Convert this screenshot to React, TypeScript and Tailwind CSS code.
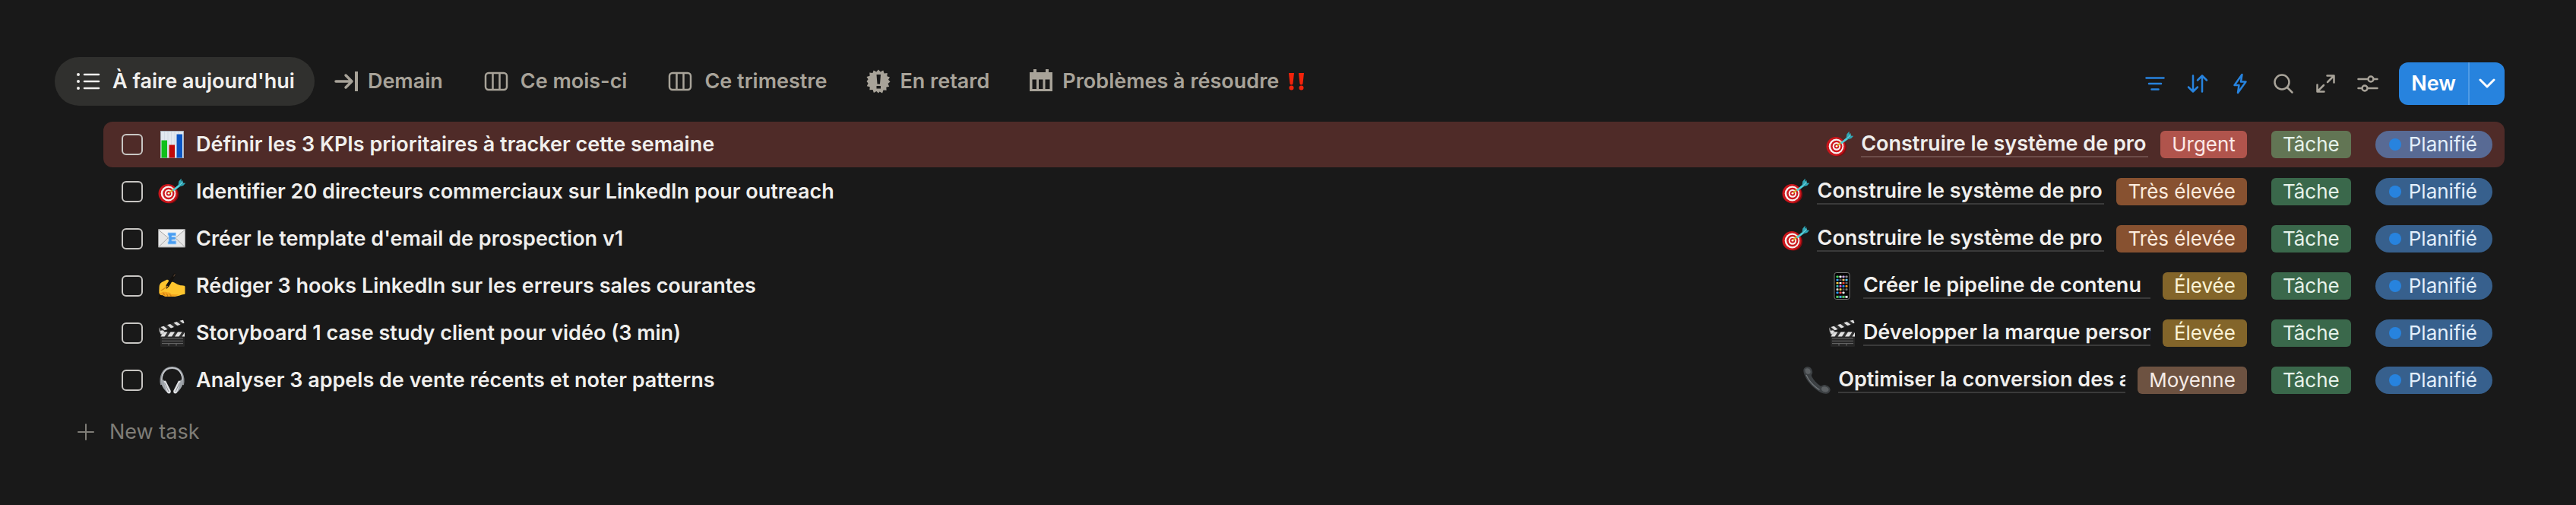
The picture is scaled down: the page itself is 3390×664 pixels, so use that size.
import { useState } from "react";
import type { ReactNode } from "react";
import clsx from "clsx";

type Priority = "Urgent" | "Très élevée" | "Élevée" | "Moyenne";

type Task = {
  id: string;
  title: string;
  icon: ReactNode;
  project: string;
  projectIcon: ReactNode;
  priority: Priority;
  overdue?: boolean;
};

/* ---------- Emojis ---------- */

const ChartEmoji = () => (
  <svg viewBox="0 0 36 36" className="size-9 shrink-0" aria-hidden="true">
    <rect x="3" y="0" width="31" height="36" fill="#a9b1bb" />
    <rect x="4" y="1" width="29" height="34" fill="#e1e8f0" />
    <path d="M8.500 1v34M13 1v34M17.500 1v34M22 1v34M26.500 1v34" stroke="#d2dbe6" strokeWidth="1" />
    <rect x="4.500" y="12.500" width="7.500" height="23" fill="#0fc01b" />
    <rect x="14.500" y="18.500" width="7.500" height="17" fill="#c00a0a" />
    <rect x="24.500" y="4.500" width="7.500" height="31" fill="#0a55c4" />
  </svg>
);

const TargetEmoji = () => (
  <svg viewBox="0 0 36 36" className="size-9 shrink-0" aria-hidden="true">
    <ellipse cx="15" cy="21.500" rx="12" ry="12" fill="#7d0b0f" />
    <ellipse cx="13" cy="20.500" rx="12.500" ry="12.500" fill="#c9151b" />
    <ellipse cx="13.500" cy="20.500" rx="9.800" ry="10" fill="#f7efee" />
    <ellipse cx="13.800" cy="20.500" rx="7.600" ry="7.800" fill="#cd181e" />
    <ellipse cx="13.900" cy="20.400" rx="5.200" ry="5.400" fill="#f7efee" />
    <ellipse cx="14" cy="20.300" rx="3.200" ry="3.300" fill="#cd181e" />
    <circle cx="14" cy="20.200" r="1.400" fill="#fff" />
    <path d="M14.500 20l6-5.500" stroke="#d8a92b" strokeWidth="2" />
    <path d="M19 15.500l8.500-7 1.800 2.200-8.800 6.800z" fill="#4fd0dc" />
    <path d="M26.500 9.500l.8-5 3.200-3.700.4 3.800 1.800-1.600-.2 3.500 3.700.3-3 3.200-5.200 1.500z" fill="#2fa5b4" />
    <path d="M27.500 10l5-4.500" stroke="#8be6ee" strokeWidth="1" />
  </svg>
);

const MailEmoji = () => (
  <svg viewBox="0 0 36 36" className="size-9 shrink-0" aria-hidden="true">
    <rect x="0" y="5" width="36" height="24.500" rx="1" fill="#9b9b9b" />
    <rect x="1" y="6" width="34" height="22.500" fill="#e6e6e6" />
    <path d="M1 28.500l12.500-12M35 28.500l-12.500-12" stroke="#a8a8a8" strokeWidth="1" />
    <path d="M1 6.500l15 12.500q2 1.500 4 0l15-12.500" fill="#f3f3f3" stroke="#a8a8a8" strokeWidth="1" />
    <path d="M13 10h10.500v4h-5.500v1.500h5v3.500h-5v1.800h5.800v4.200h-10.800v-3.500h1v-8h-1z" fill="#4a9df0" stroke="#a7d0f7" strokeWidth=".8" />
  </svg>
);

const WritingEmoji = () => (
  <svg viewBox="0 0 36 36" className="size-9 shrink-0" aria-hidden="true">
    <path d="M0 36l1.500-5.500L5 28l1 3-3.500 4z" fill="#15120f" />
    <path
      d="M1.500 20c0-3 1-5.500 3.500-7l6-3c2-1 3.500.5 3 2.500l5.500.3c3.500 1.200 5.500 3.200 8.500 4 2.500.7 4.500.6 6.500 1 .7.200 1 .8 1 1.600v8.300c0 .8-.5 1.300-1.300 1.400-4 .4-7.200 2.400-12.200 2.900H12c-2.500.3-3.500-.5-5-1.500-2.500-.3-5-.8-5.500-3.500-.3-2.200 0-4.700 0-7z"
      fill="#fec52e"
    />
    <path
      d="M1.500 26c1.500 1.500 3.500 1 5-.5 2 .5 4.500 0 6 1 2 0 4 .6 5 2.500 4-.2 7 .5 10 .2-2 1-4.500 2.300-7.200 2.800H12c-2.500.3-3.500-.5-5-1.500-2.500-.3-5.200-1-5.500-4.500z"
      fill="#f3a41d"
    />
    <path d="M8 30c.2-1.500-.3-2.300-1.500-3M12.500 31.500c.2-1.500-.3-2.500-1.500-3M17 31.500c0-1-.5-1.800-1.500-2.300" stroke="#b4690f" strokeWidth=".9" fill="none" />
    <path d="M10.500 17L20.500 2c1-1.500 4-.5 3 1.500L14.500 18.500 11 22z" fill="#15120f" />
    <path d="M20.500 5.500l2-3" stroke="#5a4636" strokeWidth="1.200" />
    <path d="M4 24c3-1 5.500-4 8.500-5.500" stroke="#d98d17" strokeWidth="1.200" fill="none" strokeLinecap="round" />
  </svg>
);

const ClapperEmoji = () => (
  <svg viewBox="0 0 36 36" className="size-9 shrink-0" aria-hidden="true">
    <path d="M.5 11L33 .3l1.800 4.500L2.500 16.500z" fill="#2c2c2c" />
    <path d="M3.500 10l5 4.300 4-1.400-5-4.200zM12 7.200l5 4.200 4-1.500-5-4zM20.500 4.500l5 3.800 4-1.500-5-3.700zM28.500 1.800l4.500 3.500 1.500-.8-1.500-3.800z" fill="#dedede" />
    <path d="M1 10.500l3.500 6.500H2z" fill="#b9b9b9" />
    <rect x="3" y="16.500" width="32" height="19" rx="1.200" fill="#333" />
    <rect x="3" y="22.500" width="32" height="13" rx="1.200" fill="#262626" />
    <path d="M7 16.500h5.500l-4 6H3.500zM16.500 16.500H22l-4 6h-5.500zM26 16.500h5.500l-4 6H22zM35 17v5.500h-3.500z" fill="#e2e2e2" />
    <path d="M5 25h28M5 28.300h28M5 31.600h28M14 31.600v3M24 31.600v3" stroke="#6b6b6b" strokeWidth="1" />
    <circle cx="5.500" cy="17" r="2.800" fill="#c9c9c9" />
    <circle cx="5" cy="16.500" r="1" fill="#fff" />
  </svg>
);

const HeadphonesEmoji = () => (
  <svg viewBox="0 0 36 36" className="size-9 shrink-0" aria-hidden="true">
    <path d="M4.500 24C2.500 15 5.500 1.500 18.500 1.500S34.500 15 32.500 24" fill="none" stroke="#8b8f94" strokeWidth="3" />
    <path d="M5 21C4 11 8 1.800 18.500 1.800S33 11 32 21" fill="none" stroke="#c9ccd0" strokeWidth="1.500" />
    <path d="M4 18.500l3-1.500 7.500 14.500c.8 2-1.200 3.500-2.800 2.200C8 30.500 4 25.500 4 18.500z" fill="#9ea3a9" />
    <path d="M33 18.500l-3-1.500-7.500 14.500c-.8 2 1.200 3.500 2.800 2.200C29 30.500 33 25.500 33 18.500z" fill="#9ea3a9" />
    <path d="M7.500 19.500c1-1.500 2.500-1.200 3.200.3l5.800 11.500c1 2-.5 4.200-2 4.200s-2.200-.8-2.800-2.200z" fill="#dfe1e4" />
    <path d="M29.500 19.500c-1-1.500-2.500-1.200-3.200.3l-5.800 11.500c-1 2 .5 4.200 2 4.200s2.200-.8 2.800-2.200z" fill="#dfe1e4" />
    <path d="M8.500 21l5.500 12M28.500 21l-5.500 12" stroke="#85898e" strokeWidth="1" />
  </svg>
);

const appColors = [
  ["#4bd964", "#f4f4f4", "#c9a3e8", "#8c8c8c"],
  ["#3ca6f0", "#555", "#e9b96a", "#5ac8fa"],
  ["#f2d04c", "#f4f4f4", "#ef4b3f", "#666"],
  ["#41c7c7", "#d857d4", "#2b8ff2", "#f59a23"],
  ["#ddd", "#f2d04c", "#555", "#777"],
  ["#2f9cf4", "#ef5350", "#eee", "#111"],
];

const SmartphoneEmoji = () => (
  <svg viewBox="0 0 36 36" className="size-9 shrink-0" aria-hidden="true">
    <rect x="8" y=".5" width="20" height="35" rx="2.800" fill="#050505" stroke="#777" strokeWidth="1" />
    {appColors.map((row, y) =>
      row.map((fill, x) => <rect key={`${x}-${y}`} x={10.5 + x * 4} y={4.5 + y * 4.2} width="3" height="2.700" rx=".7" fill={fill} />)
    )}
    <rect x="10" y="30.500" width="16" height="3.500" fill="#333" />
    {["#4bd964", "#3cb9f2", "#4bd964", "#f4f4f4"].map((fill, x) => (
      <rect key={x} x={10.5 + x * 4} y="31" width="3" height="2.700" rx=".7" fill={fill} />
    ))}
  </svg>
);

const PhoneEmoji = () => (
  <svg viewBox="0 0 36 36" className="size-9 shrink-0" aria-hidden="true">
    <path
      d="M1.500 2C4-.3 9-.5 10.800 3c1.500 3 2 5 .7 7-.8 1.200-.8 2 0 3.500 2.500 4.500 6 8.500 10.500 11.500 1.300.8 2.200.7 3.300-.2 2-1.500 4-1 7 .7 4 2.300 4.200 6.500 1.700 8.700-3.500 3-9 1.300-14-2C11.500 26.700 4.500 19 1.300 10 .2 7-.2 3.700 1.500 2z"
      fill="#3d4144"
    />
    <path d="M3 3c2-1.500 5-1 6 1.200 1 2.200 1 4-.3 5-1.700 1-4.700.8-5.500-1.200C2.500 6 2 4 3 3zM25 27c2-1.300 4-1 6.300.3 2.500 1.600 3 4 1.200 5.300-2 1.400-5.500.8-7.500-.8-1.300-1.200-1.400-3.700 0-4.800z" fill="#5c6063" />
    <path d="M4 11c3.500 8 9.500 14.500 17.500 19.500" stroke="#74797c" strokeWidth="1.200" fill="none" />
  </svg>
);

/* ---------- View icons ---------- */

const ListIcon = () => (
  <svg viewBox="0 0 32 32" className="size-8 shrink-0" aria-hidden="true">
    <path d="M11 7h19M11 16h19M11 25h19" stroke="currentColor" strokeWidth="2.500" strokeLinecap="round" />
    <circle cx="3" cy="7" r="2" fill="currentColor" />
    <circle cx="3" cy="16" r="2" fill="currentColor" />
    <circle cx="3" cy="25" r="2" fill="currentColor" />
  </svg>
);

const ArrowToLineIcon = () => (
  <svg viewBox="0 0 32 32" className="size-8 shrink-0" aria-hidden="true">
    <path d="M2 16h21M15 8l8 8-8 8" fill="none" stroke="currentColor" strokeWidth="3.500" strokeLinecap="round" strokeLinejoin="round" />
    <path d="M29 3v26" stroke="currentColor" strokeWidth="4" />
  </svg>
);

const BoardIcon = () => (
  <svg viewBox="0 0 32 32" className="size-8 shrink-0" aria-hidden="true">
    <rect x="2" y="5" width="28" height="22" rx="4" fill="none" stroke="currentColor" strokeWidth="2.500" />
    <path d="M11.500 5v22M20.500 5v22" stroke="currentColor" strokeWidth="2.500" />
  </svg>
);

const BadgeIcon = () => (
  <svg viewBox="0 0 32 32" className="size-8 shrink-0" aria-hidden="true">
    <path
      d="M16 .5l2.700 3 3.600-2 1.300 3.900 4.100-.3-.3 4.100 3.600 1.200-2 3.300 2.500 2.800-3 2.500 1.700 3.700-3.900 1 .3 4.100-4.100-.2-1.400 3.900-3.500-2L16 31.500l-2.600-2.500-3.500 2-1.400-3.900-4.100.2.300-4.100-3.900-1 1.700-3.700-2-2.500 2-2.800-2-3.300 4.100-1.200-.3-4.100 4.100.3L9.700 1.500l3.600 2z"
      fill="currentColor"
    />
    <path d="M13.500 7h5.500l-1 12.500h-3.500zM13.500 22h5.500v3.500h-5.500z" fill="#191919" />
  </svg>
);

const CalendarIcon = () => (
  <svg viewBox="0 0 32 32" className="size-8 shrink-0" aria-hidden="true">
    <path d="M6 0h4v4h12V0h4v4h5v25H1V4h5zM4.500 13.500V26H10V13.500zM13 13.500V26h5.500V13.500zM21.500 13.500V26h6V13.500z" fill="currentColor" fillRule="evenodd" />
  </svg>
);

const DoubleExclamation = () => (
  <svg viewBox="0 0 22 32" className="h-8 w-[22px] shrink-0" aria-hidden="true">
    <path d="M1 5h7L6.500 19q-.2 1.500-2 1.500t-2-1.500zM14 5h7l-1.500 14q-.2 1.500-2 1.500t-2-1.500z" fill="#f3230b" />
    <circle cx="4.500" cy="24.500" r="3" fill="#f3230b" />
    <circle cx="17.500" cy="24.500" r="3" fill="#f3230b" />
  </svg>
);

/* ---------- Toolbar icons ---------- */

const toolbar = [
  {
    label: "Filtrer",
    active: true,
    icon: <path d="M3.500 8.500h23M7 16h16M10.500 23.500h9" />,
  },
  {
    label: "Trier",
    active: true,
    icon: <path d="M9 5.500v21M3 20.500l6 6 6-6M21 26.500v-21M15 11.500l6-6 6 6" />,
  },
  {
    label: "Automatisations",
    active: true,
    icon: <path d="M17.500 4L7.500 18h6l-1.500 10 10.500-14.500h-6.500z" />,
  },
  {
    label: "Rechercher",
    active: false,
    icon: <path d="M23.500 14a9.500 9.500 0 1 1-19 0 9.500 9.500 0 0 1 19 0zM21 21l6.500 6.500" />,
  },
  {
    label: "Agrandir",
    active: false,
    icon: <path d="M17.500 5.500h9v9M26 6l-8 8M13.500 26.500h-9v-9M5 26l8-8" />,
  },
  {
    label: "Réglages",
    active: false,
    icon: <path d="M2.500 10h13M22.500 10h5M2.500 22h5M14.500 22h13M22.500 10a3.500 3.500 0 1 1-7 0 3.500 3.500 0 0 1 7 0zM14.500 22a3.500 3.500 0 1 1-7 0 3.500 3.500 0 0 1 7 0z" />,
  },
];

/* ---------- Data ---------- */

const views = [
  { name: "À faire aujourd'hui", icon: <ListIcon /> },
  { name: "Demain", icon: <ArrowToLineIcon />, compact: true },
  { name: "Ce mois-ci", icon: <BoardIcon /> },
  { name: "Ce trimestre", icon: <BoardIcon /> },
  { name: "En retard", icon: <BadgeIcon />, compact: true },
  { name: "Problèmes à résoudre", icon: <CalendarIcon />, compact: true, suffix: <DoubleExclamation /> },
];

const tasks: Task[] = [
  {
    id: "kpis",
    title: "Définir les 3 KPIs prioritaires à tracker cette semaine",
    icon: <ChartEmoji />,
    project: "Construire le système de pro",
    projectIcon: <TargetEmoji />,
    priority: "Urgent",
    overdue: true,
  },
  {
    id: "directeurs",
    title: "Identifier 20 directeurs commerciaux sur LinkedIn pour outreach",
    icon: <TargetEmoji />,
    project: "Construire le système de pro",
    projectIcon: <TargetEmoji />,
    priority: "Très élevée",
  },
  {
    id: "template",
    title: "Créer le template d'email de prospection v1",
    icon: <MailEmoji />,
    project: "Construire le système de pro",
    projectIcon: <TargetEmoji />,
    priority: "Très élevée",
  },
  {
    id: "hooks",
    title: "Rédiger 3 hooks LinkedIn sur les erreurs sales courantes",
    icon: <WritingEmoji />,
    project: "Créer le pipeline de contenu",
    projectIcon: <SmartphoneEmoji />,
    priority: "Élevée",
  },
  {
    id: "storyboard",
    title: "Storyboard 1 case study client pour vidéo (3 min)",
    icon: <ClapperEmoji />,
    project: "Développer la marque person",
    projectIcon: <ClapperEmoji />,
    priority: "Élevée",
  },
  {
    id: "appels",
    title: "Analyser 3 appels de vente récents et noter patterns",
    icon: <HeadphonesEmoji />,
    project: "Optimiser la conversion des a",
    projectIcon: <PhoneEmoji />,
    priority: "Moyenne",
  },
];

const priorityStyles: Record<Priority, string> = {
  Urgent: "bg-[#b0544c] text-[#fde9e7]",
  "Très élevée": "bg-[#875130] text-[#fdebdd]",
  Élevée: "bg-[#83652a] text-[#fbf3d6]",
  Moyenne: "bg-[#6d5241] text-[#f5ebe6]",
};

const TaskRow = ({ task, done, onToggle }: { task: Task; done: boolean; onToggle: () => void }) => (
  <li
    className={clsx(
      "flex h-[60px] items-center justify-between rounded-xl pl-6 pr-4",
      task.overdue && "bg-[#4f2b28]"
    )}
  >
    <div className="flex items-center gap-5">
      <input
        type="checkbox"
        id={task.id}
        checked={done}
        onChange={onToggle}
        className="size-7 appearance-none rounded-md border-2 border-[#c8c6c3] checked:border-[#2783de] checked:bg-[#2783de]"
      />
      <label htmlFor={task.id} className="flex items-center gap-3.5 whitespace-nowrap font-semibold">
        {task.icon}
        {task.title}
      </label>
    </div>

    <div className="flex items-center">
      <a href="#" className="mr-4 flex items-center gap-2.5 font-semibold">
        {task.projectIcon}
        <span
          className={clsx(
            "block h-[34px] w-[378px] overflow-hidden whitespace-nowrap border-b-2 leading-8",
            task.overdue ? "border-[#6d4d4a]" : "border-[#3a3a3a]"
          )}
        >
          {task.project}
        </span>
      </a>
      <span className={clsx("mr-8 rounded-md px-[15px] text-[26px] leading-9", priorityStyles[task.priority])}>
        {task.priority}
      </span>
      <span
        className={clsx(
          "mr-8 rounded-md px-[15px] text-[26px] leading-9 text-[#e6f2ea]",
          task.overdue ? "bg-[#627554]" : "bg-[#3a684b]"
        )}
      >
        Tâche
      </span>
      <span
        className={clsx(
          "flex items-center gap-2.5 rounded-full pl-[18px] pr-5 text-[26px] leading-9 text-[#e3effb]",
          task.overdue ? "bg-[#586a94]" : "bg-[#37608d]"
        )}
      >
        <span className="size-4 rounded-full bg-[#2783de]" />
        Planifié
      </span>
    </div>
  </li>
);

const App = () => {
  const [activeView, setActiveView] = useState(views[0].name);
  const [doneTasks, setDoneTasks] = useState<string[]>([]);

  const toggleTask = (id: string) => {
    setDoneTasks((prev) => (prev.includes(id) ? prev.filter((t) => t !== id) : [...prev, id]));
  };

  return (
    <main className="min-h-screen bg-[#191919] pl-[72px] pr-[94px] pt-[75px] font-[Inter,sans-serif] text-[27px] leading-9 text-[#f0efed]">
      <header className="flex items-center justify-between">
        <div role="tablist" className="flex items-center">
          {views.map((view) => (
            <button
              key={view.name}
              type="button"
              role="tab"
              aria-selected={view.name === activeView}
              onClick={() => setActiveView(view.name)}
              className={clsx(
                "flex h-16 items-center whitespace-nowrap rounded-full pr-[26px] font-semibold",
                view.compact ? "gap-3 pl-[26px]" : "gap-4 pl-7",
                view.name === activeView ? "bg-[#30302e]" : "text-[#a8a399]"
              )}
            >
              {view.icon}
              {view.name}
              {view.suffix}
            </button>
          ))}
        </div>

        <div className="mt-1.5 flex items-center">
          <div className="mr-[26px] flex items-center gap-[26px]">
            {toolbar.map((tool) => (
              <button
                key={tool.label}
                type="button"
                aria-label={tool.label}
                className={tool.active ? "text-[#2783de]" : "text-[#a8a399]"}
              >
                <svg
                  viewBox="0 0 30 32"
                  className="h-8 w-[30px]"
                  fill="none"
                  stroke="currentColor"
                  strokeWidth="2.500"
                  strokeLinecap="round"
                  strokeLinejoin="round"
                  aria-hidden="true"
                >
                  {tool.icon}
                </svg>
              </button>
            ))}
          </div>
          <div className="flex h-14 overflow-hidden rounded-xl bg-[#2783de] text-white">
            <button type="button" className="px-4 font-semibold">
              New
            </button>
            <button
              type="button"
              aria-label="Plus d'options"
              className="flex w-12 items-center justify-center border-l-2 border-[#4f9be5]"
            >
              <svg viewBox="0 0 22 14" className="h-3.5 w-[22px]" fill="none" aria-hidden="true">
                <path d="M2 2l9 9 9-9" stroke="currentColor" strokeWidth="3" strokeLinecap="round" strokeLinejoin="round" />
              </svg>
            </button>
          </div>
        </div>
      </header>

      <ul className="mt-[21px] flex flex-col gap-0.5 pl-16">
        {tasks.map((task) => (
          <TaskRow
            key={task.id}
            task={task}
            done={doneTasks.includes(task.id)}
            onToggle={() => toggleTask(task.id)}
          />
        ))}
      </ul>

      <button type="button" className="mt-5 flex items-center gap-5 pl-[30px] text-[#7f7d77]">
        <svg viewBox="0 0 22 22" className="size-[22px]" aria-hidden="true">
          <path d="M11 1v20M1 11h20" stroke="currentColor" strokeWidth="2" strokeLinecap="round" />
        </svg>
        New task
      </button>
    </main>
  );
};

export default App;
